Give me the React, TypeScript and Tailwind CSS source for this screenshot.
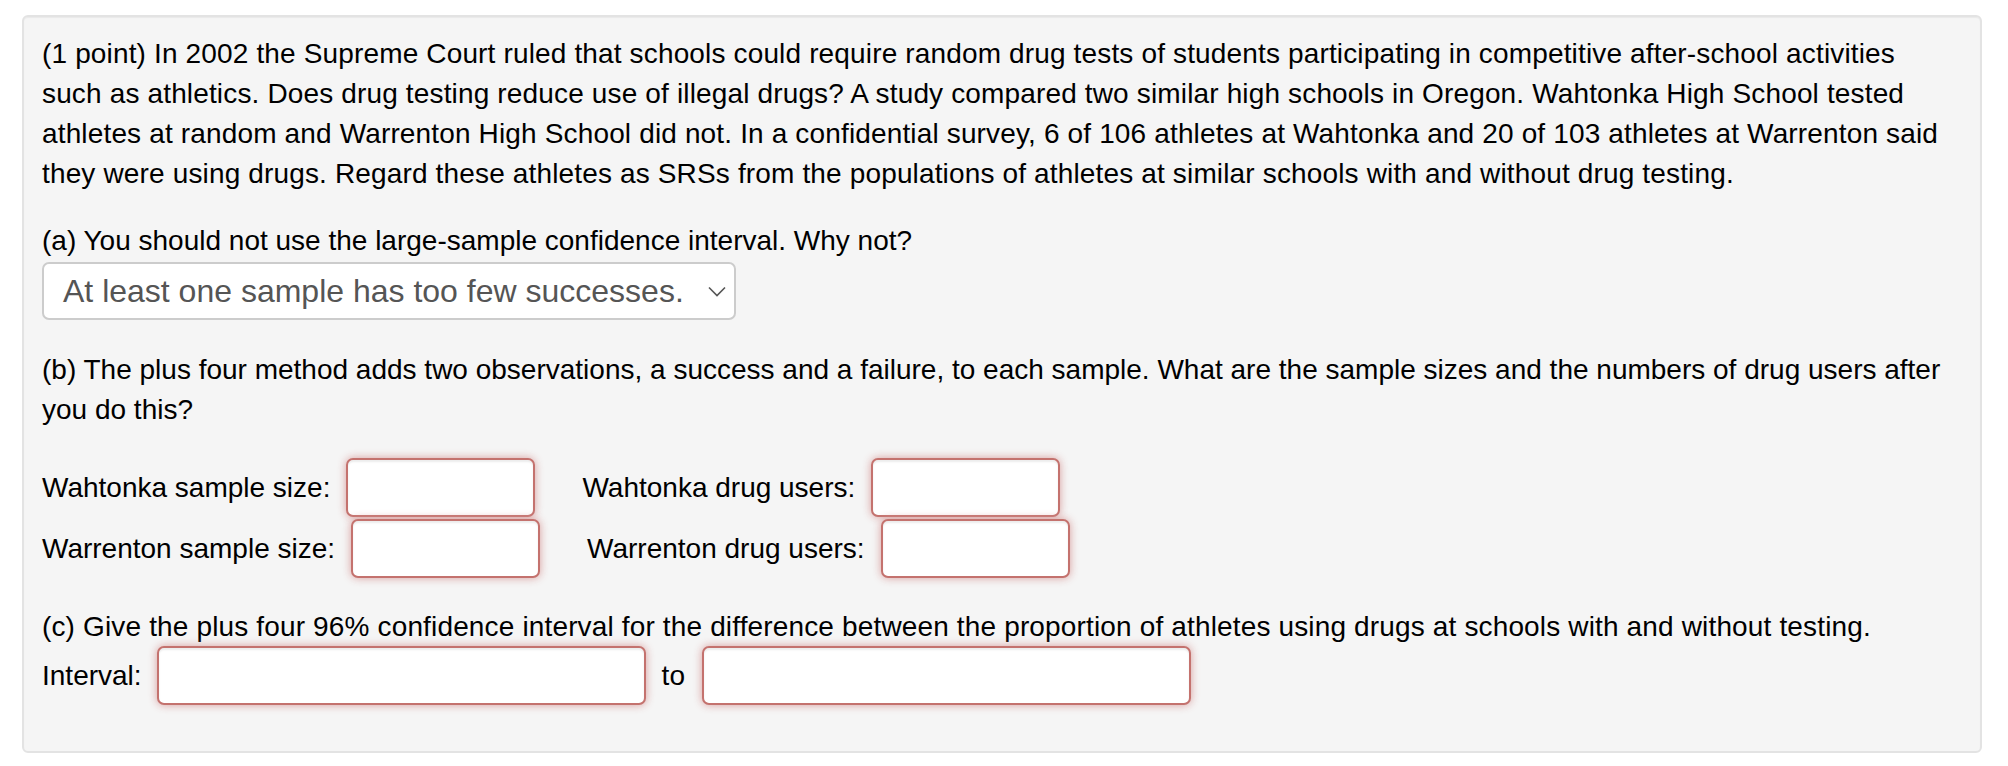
const inputCls =
  "h-[59px] bg-white border-2 border-[#c4726e] rounded-[7px] shadow-[inset_0_2px_2px_rgba(0,0,0,0.08),0_0_9px_rgba(213,147,146,0.9)] outline-none";

const Field = ({ label, width, className = "" }: { label: string; width: string; className?: string }) => (
  <div className={"flex items-center " + className}>
    <span>{label}</span>
    <input type="text" className={inputCls + " ml-[16px] " + width} />
  </div>
);

export default function App() {
  return (
    <div className="min-h-screen bg-white pt-[15px] pl-[22px] font-['Liberation_Sans',Arial,sans-serif] text-[28px] leading-[40px] text-black">
      <div className="w-[1960px] h-[738px] bg-[#f5f5f5] border-2 border-[#e3e3e3] rounded-[6px] shadow-[inset_0_1px_1px_rgba(0,0,0,0.05)] pt-[17px] px-[18px]">
        <p className="tracking-[0.15px]">
          (1 point) In 2002 the Supreme Court ruled that schools could require random drug tests of students
          participating in competitive after-school activities
          <br />
          such as athletics. Does drug testing reduce use of illegal drugs? A study compared two similar high schools in
          Oregon. Wahtonka High School tested
          <br />
          athletes at random and Warrenton High School did not. In a confidential survey, 6 of 106 athletes at Wahtonka
          and 20 of 103 athletes at Warrenton said
          <br />
          they were using drugs. Regard these athletes as SRSs from the populations of athletes at similar schools with
          and without drug testing.
        </p>

        <p className="mt-[27px]">(a) You should not use the large-sample confidence interval. Why not?</p>
        <div className="mt-[1px] relative w-[694px] h-[58px] bg-white border-2 border-[#cccccc] rounded-[7px] flex items-center pl-[19px] text-[32px] text-[#555555]">
          <span>At least one sample has too few successes.</span>
          <svg
            className="absolute right-[8px] top-[22px]"
            width="18"
            height="11"
            viewBox="0 0 18 11"
            fill="none"
            stroke="#555"
            strokeWidth="1.6"
          >
            <path d="M1 1.5 L9 9.5 L17 1.5" />
          </svg>
        </div>

        <p className="mt-[30px]">
          (b) The plus four method adds two observations, a success and a failure, to each sample. What are the sample
          sizes and the numbers of drug users after you do this?
        </p>

        <div className="mt-[28px] flex flex-col gap-[2px]">
          <div className="flex items-center">
            <Field label="Wahtonka sample size:" width="w-[189px]" />
            <Field label="Wahtonka drug users:" width="w-[189px]" className="ml-[47px]" />
          </div>
          <div className="flex items-center">
            <Field label="Warrenton sample size:" width="w-[189px]" />
            <Field label="Warrenton drug users:" width="w-[189px]" className="ml-[47px]" />
          </div>
        </div>

        <p className="mt-[29px] tracking-[0.15px]">
          (c) Give the plus four 96% confidence interval for the difference between the proportion of athletes using
          drugs at schools with and without testing.
        </p>
        <div className="flex items-center -mt-[1px]">
          <span>Interval:</span>
          <input type="text" className={inputCls + " ml-[15px] w-[489px] h-[58px]"} />
          <span className="ml-[16px]">to</span>
          <input type="text" className={inputCls + " ml-[17px] w-[489px] h-[58px]"} />
        </div>
      </div>
    </div>
  );
}
